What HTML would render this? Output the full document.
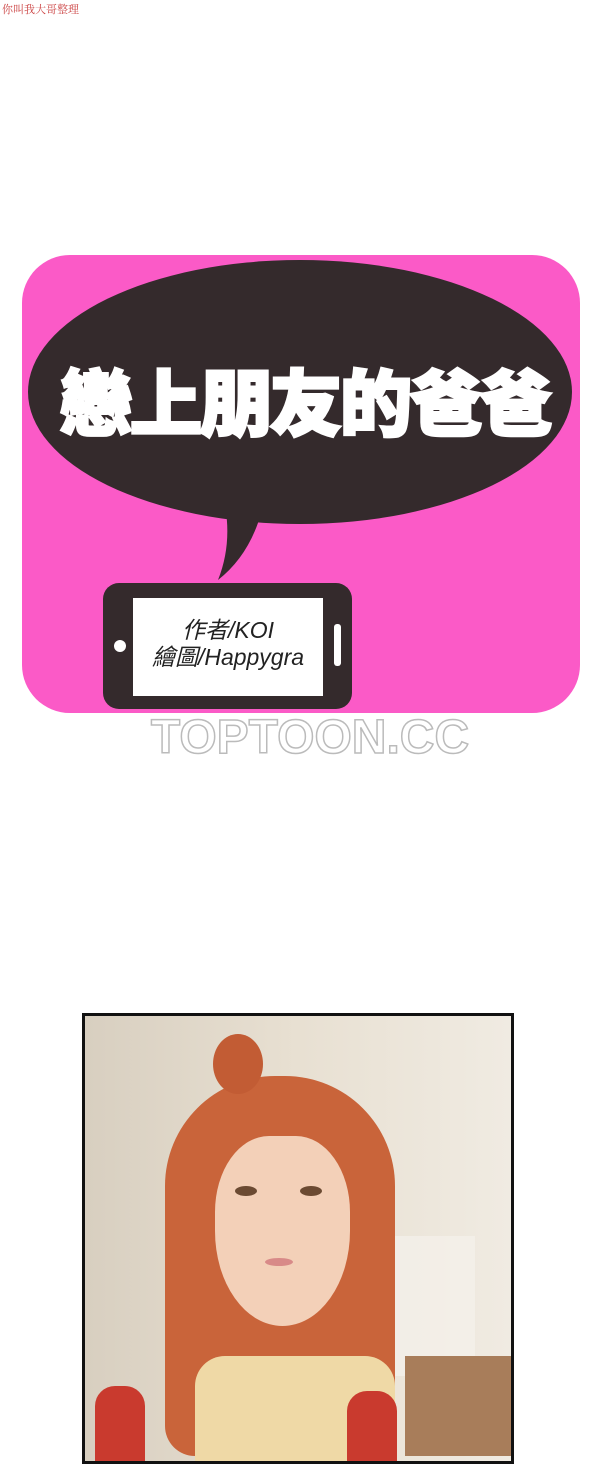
<!DOCTYPE html>
<html><head><meta charset="utf-8"><style>
body{margin:0;width:600px;height:1454px;background:#fff;position:relative;overflow:hidden;font-family:"Liberation Sans","Noto Sans CJK TC",sans-serif}
.a{position:absolute}
</style></head><body>
<div class="a" style="left:2px;top:1px;font-size:11px;color:#c44;font-family:'Liberation Serif','Noto Serif CJK SC',serif">你叫我大哥整理</div>
<div class="a" style="left:22px;top:255px;width:558px;height:458px;background:#fb5ac7;border-radius:48px"></div>
<svg class="a" style="left:0;top:0" width="600" height="760">
<path d="M225 505 Q232 545 218 580 Q250 555 262 510 Z" fill="#342a2c"/>
<ellipse cx="300" cy="392" rx="272" ry="132" fill="#342a2c"/>
<rect x="103" y="583" width="249" height="126" rx="16" fill="#342a2c"/>
<rect x="133" y="598" width="190" height="98" fill="#fff"/>
<circle cx="120" cy="646" r="6" fill="#fff"/>
<rect x="334" y="624" width="7" height="42" rx="3" fill="#fff"/>
</svg>
<div class="a" style="left:40px;top:368px;width:530px;text-align:center;font-size:72px;font-weight:900;color:#fff;letter-spacing:-2px;-webkit-text-stroke:3px #fff;line-height:76px">戀上朋友的爸爸</div>
<div class="a" style="left:133px;top:617px;width:190px;text-align:center;font-size:23px;line-height:27px;color:#222;font-style:italic">作者/KOI<br>繪圖/Happygra</div>
<div class="a" style="left:140px;top:710px;width:340px;text-align:center;font-size:48px;font-weight:bold;color:#fff;-webkit-text-stroke:1.5px #bbb;letter-spacing:0px">TOPTOON.CC</div>
<div class="a" style="left:82px;top:1013px;width:426px;height:445px;border:3px solid #111;background:linear-gradient(90deg,#d8cfc0,#e8e0d2 50%,#f0ebe2)">
<div class="a" style="left:290px;top:220px;width:100px;height:140px;background:#f4f0ea;opacity:.8"></div>
<div class="a" style="left:320px;top:340px;width:106px;height:100px;background:#a87d5a"></div>
<div class="a" style="left:80px;top:60px;width:230px;height:380px;background:#c9643a;border-radius:110px 110px 30px 30px"></div>
<div class="a" style="left:128px;top:18px;width:50px;height:60px;background:#c25c34;border-radius:50%"></div>
<div class="a" style="left:130px;top:120px;width:135px;height:190px;background:#f3d0b8;border-radius:40% 40% 50% 50%"></div>
<div class="a" style="left:150px;top:170px;width:22px;height:10px;background:#6b4a32;border-radius:50%"></div>
<div class="a" style="left:215px;top:170px;width:22px;height:10px;background:#6b4a32;border-radius:50%"></div>
<div class="a" style="left:180px;top:242px;width:28px;height:8px;background:#d88a88;border-radius:50%"></div>
<div class="a" style="left:110px;top:340px;width:200px;height:105px;background:#efd9a6;border-radius:30px 30px 0 0"></div>
<div class="a" style="left:10px;top:370px;width:50px;height:75px;background:#c93a2e;border-radius:20px 20px 0 0"></div>
<div class="a" style="left:262px;top:375px;width:50px;height:70px;background:#c93a2e;border-radius:20px 20px 0 0"></div>
</div>
</body></html>
